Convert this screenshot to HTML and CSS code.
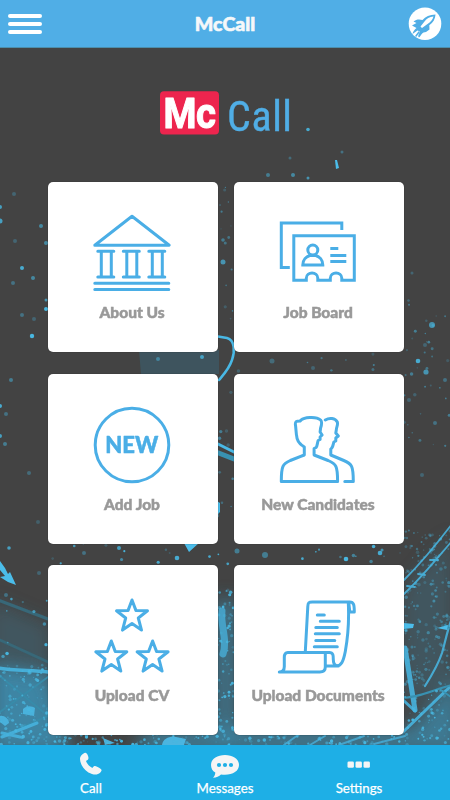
FILE: index.html
```html
<!DOCTYPE html>
<html lang="en">
<head>
<meta charset="utf-8">
<title>McCall</title>
<link rel="stylesheet" href="styles.css">
</head>
<body>
<div class="app">
  <header class="topbar">
    <button class="menu" aria-label="Menu"><span></span><span></span><span></span></button>
    <h1>McCall</h1>
    <svg class="rocket" viewBox="408 6 34 34">
      <circle cx="425" cy="22.700" r="16.300" fill="#fff"/>
      <g stroke-linejoin="round" stroke-linecap="round">
        <path fill="#50aee6" d="M435.500 13.500c-6 .2-10 2-13 5.500-3-1-6.500-.8-9 1.500l3 1.500-4.500 2.500 4.500 2.500c-2 1.500-3.500 3.500-4 6l5-3.600 2.500 1-2 4.500 5.500-3.500 2.500-.4 3.500-2.500-.2-4.300c4-2.600 6-6.500 6.200-10.700z"/>
        <path fill="#fff" d="M433.500 15.500c-4 .5-7 2-9 5l-4 5 1.500 1.500 5.500-4c3-2 5.200-4.500 6-7.500z"/>
        <path fill="none" stroke="#50aee6" stroke-width="1.500" d="M419 31l-3 4m6.500-4.500l-3.500 5"/>
      </g>
    </svg>
  </header>

  <main class="home">
    <svg class="backdrop" viewBox="0 48 450 697" preserveAspectRatio="none" aria-hidden="true">
      <defs>
        <filter id="soft" x="-20%" y="-20%" width="140%" height="140%"><feGaussianBlur stdDeviation=".7"/></filter>
        <filter id="haze" x="-50%" y="-50%" width="200%" height="200%"><feGaussianBlur stdDeviation="9"/></filter>
      </defs>
      <rect y="48" width="450" height="697" fill="#434343"/>
      <g fill="#3c91b5" filter="url(#haze)">
        <path opacity=".85" d="M-10 665l60 8 20 80H-10z"/>
        <path opacity=".25" d="M-10 600l60 25v50H-10z"/>
        <path opacity=".7" d="M150 728h260l50-55v80H130z"/>
        <path opacity=".6" d="M213 600h25v140h-25z"/>
        <path opacity=".25" d="M402 590l50-55v150l-50 20z"/>
      </g>
      <path fill="#3a6475" opacity=".55" filter="url(#soft)" d="M139 350h80v24h-78z"/>
      <g fill="none" stroke="#49b8e5" stroke-linecap="round" filter="url(#soft)">
        <path stroke-width="2.500" d="M215 336l12 2c8 2 8 14 5 22-3 9-8 14-13 20"/>
        <path stroke-width="3" d="M216 443l18 9"/>
        <path stroke="#3991b1" stroke-width="5" d="M216 452l18 7"/>
        <path stroke="#376778" stroke-width="3" d="M-2 600l50 19M0 640l48 22"/>
        <path stroke-width="3.500" opacity=".85" d="M-2 668c16 3 33 2 50 4"/>
        <path stroke="#388ba9" stroke-width="2" d="M0 676l48 40M0 712l48-35M0 737l50-22"/>
        <path stroke-width="1.800" opacity=".85" d="M404 580c18-18 32-35 48-56M404 594c18-17 30-32 48-53M407 586l8 1m3-13l7 1m5-15l8 0"/>
        <path stroke-width="5" opacity=".85" d="M405 648l10 62"/>
        <path stroke-width="2.200" opacity=".85" d="M452 618c-5 13-7 25-10 35-4 12-10 22-17 33"/>
        <path stroke-width="3" opacity=".85" d="M403 732c15-14 34-33 50-48M415 711l-12-11"/>
        <path stroke="#3991b1" stroke-width="2" d="M400 698c20 0 34-9 52-13M441 690l10 7M445 625l6 4"/>
        <path stroke-width="2" opacity=".7" d="M284 745l14-10m12 10l15-9m14 9l25-9M374 744l31-8"/>
        <path stroke-width="7" opacity=".7" d="M222 611c-2 14 6 29 1 43"/>
        <path stroke-width="3" opacity=".8" d="M2 737l35-14m-35 10l18 4"/>
      </g>
      <g fill="#4cbdea" filter="url(#soft)">
        <path d="M0 561l5 7 3 6 2-2 6 13-8-3-8-5 5-1-5-6z"/>
        <path d="M184 543h15l-10 9zM217 501l3 2v9l-3 3z"/>
        <path opacity=".8" d="M23 709c4-4 9-3 12-1l-1 8-11-2zM0 716c4-1 9 3 9 7l-4 3-5-4z"/>
        <path d="M404 623l10 1-1 4-9 1zM437 628l11-3-1 5z"/>
        <path opacity=".9" d="M162 745c1-7 8-9 14-8l10 2-2 6zM103 738l12 5-10 2z"/>
        <path d="M335 160l2 0 2 8-3 1z"/>
      </g>
      <g id="specks" fill="#48b7e0" filter="url(#soft)"></g>
    </svg>

    <svg class="logo" viewBox="160 91 160 44" role="img" aria-label="McCall">
      <rect x="160" y="91.300" width="59" height="43.200" rx="4" fill="#ed254e"/>
      <text class="logo-mc" y="128"><tspan x="163.500" textLength="33" lengthAdjust="spacingAndGlyphs">M</tspan><tspan x="196" textLength="20" lengthAdjust="spacingAndGlyphs">c</tspan></text>
      <text class="logo-call" x="227" y="130.500" textLength="65" lengthAdjust="spacing">Call</text>
    </svg>

    <nav class="grid">
      <a class="card">
        <svg class="icon" viewBox="88.200 208.500 90 90">
          <path d="M95 245.700l37.200-29 37.200 29zM98 251.800h16M123.500 251.800h16M149 251.800h16M98 277.500h16M123.500 277.500h16M149 277.500h16M101.500 252v25M111.500 252v25M127 252v25M137 252v25M152.500 252v25M162.500 252v25M95 283.800h74M95 290h74"/>
        </svg>
        <span>About Us</span>
      </a>
      <a class="card">
        <svg class="icon square" viewBox="274.200 208 90 90">
          <path d="M290 267.500h-8.500v-44.500h60.500v7M306.500 280.300h-12.500v-44.500h60.500v44.500h-12.500v-2c0-7-11.500-7-11.500 0v2h-12.500v-2c0-7-11.500-7-11.500 0zM303 265c0-5 3.500-8.500 7-9.500h6c3.500 1 7 4.500 7 9.500zM330.500 248.500h8M330.500 255.500h16M330.500 261.500h16"/>
          <circle cx="313" cy="250" r="5"/>
        </svg>
        <span>Job Board</span>
      </a>
      <a class="card">
        <svg class="icon" viewBox="88.200 400 90 90">
          <circle cx="132.200" cy="445" r="36.800"/>
          <text class="new" x="105.500" y="452.500" textLength="53" lengthAdjust="spacingAndGlyphs">NEW</text>
        </svg>
        <span>Add Job</span>
      </a>
      <a class="card">
        <svg class="icon" viewBox="274.200 400 90 90">
          <path d="M281.500 481.500c0-16 1.500-17.500 9-21l14-5.500v-8c-6-4-7.500-7-8-13.500l-.7-7.500c-1-5 1-5 4.500-5 3-4 16-5 20.500-1 2 2 1 5 0 8l-.5 4 2 3-2 2v2.500l-2 1c-1 4-1 6-2 7l-2 1v6.500l14 5.500c8 3.500 9.500 5 9.500 21z"/>
          <path d="M325.500 420c4-2.500 10-2 12 2 1 3-1 5-1 8l-.5 3 2.500 3-2.500 2 0 3-2 1c-1 4-1 6-3 7v6l13 5.500c8 3.500 9.500 5 9.500 21h-8.500"/>
        </svg>
        <span>New Candidates</span>
      </a>
      <a class="card">
        <svg class="icon" viewBox="88.200 591.500 90 90">
          <defs><path id="star" d="M0-15.500l3.900 10.400 11.600.4-9.200 7.200 3.200 12.100L0 8.100l-9.500 6.500 3.200-12.100-9.200-7.200 11.600-.4z"/></defs>
          <use href="#star" x="132.200" y="616"/><use href="#star" x="111.500" y="657"/><use href="#star" x="152.800" y="657"/>
        </svg>
        <span>Upload CV</span>
      </a>
      <a class="card">
        <svg class="icon" viewBox="274.200 591.500 90 90">
          <path d="M305.500 652l2.500-45c.2-4 1-4.500 4.500-4.500h37.500c4 0 4.500 3 4.500 10h-4.500l-1-9M348.500 603c1 20-1 38-3 49-2 10-4 14.500-9 14.500h-10M288 653h41.500c4 0 4 3 4 7s1.500 6.500 5 6.500M288 653c-3 0-3.500 2-3.500 5v9c0 4-1.500 5.500-5 5.500h40.500c4 0 5.500-2 5.500-5v-14M317.500 615.500h7M320.500 621.800h19M316 628h21.500M315.500 634.300h24M316 641h19M314.500 647.200h23"/>
        </svg>
        <span>Upload Documents</span>
      </a>
    </nav>
  </main>

  <footer class="tabs">
    <a class="tab"><svg viewBox="0 0 30 26"><path d="M7.600 1.400c2-1.500 3.600-.2 4.600 3 .7 2.500 0 3.300-2.200 4.500 1 3 3.300 5.500 6.400 7 1.500-2 2.400-2.500 4.700-1.200 5 2.400 5.500 3.500 3 6-2.700 2.600-7 2.300-11.700-.2C7.300 17 4.200 12 4 7c-.1-2.500 1.500-4.300 3.600-5.600z"/></svg><span>Call</span></a>
    <a class="tab"><svg viewBox="0 0 30 26"><path d="M15 3C7 3 1 7.200 1 13c0 3.300 1.500 6 4.300 7.500 0 2-1 4-2.300 5.200 3.500 0 6.200-1.200 8-3.200 10 1.500 18-2.800 18-9.500C29 7.200 23 3 15 3z"/><g class="dots"><circle cx="9" cy="13" r="2.100"/><circle cx="15" cy="13" r="2.100"/><circle cx="21" cy="13" r="2.100"/></g></svg><span>Messages</span></a>
    <a class="tab"><svg viewBox="0 0 30 26"><rect x="3.500" y="9.500" width="6.400" height="6.200" rx="1.300"/><rect x="11.500" y="9.500" width="6.400" height="6.200" rx="1.300"/><rect x="19.500" y="9.500" width="6.400" height="6.200" rx="1.300"/></svg><span>Settings</span></a>
  </footer>
</div>
<script src="backdrop.js"></script>
</body>
</html>
```
FILE: styles.css
```css
* { box-sizing: border-box; }
body { margin: 0; font-family: Lato, "Liberation Sans", sans-serif; }
.app { width: 450px; height: 800px; display: flex; flex-direction: column; overflow: hidden; }

.topbar { height: 48px; flex: none; background: #50aee6; display: flex; align-items: center; justify-content: space-between; padding: 0 8px; border-bottom: 1px solid #4b8eac; }
.menu { width: 34px; height: 20px; padding: 0; border: 0; background: none; display: flex; flex-direction: column; justify-content: space-between; }
.menu span { height: 4px; border-radius: 2px; background: #fff; }
.topbar h1 { margin: 0; padding-top: 1px; font-size: 19.5px; line-height: 24px; font-weight: 900; color: #f5f8fa; -webkit-text-stroke: .6px #f5f8fa; }
.rocket { width: 34px; height: 34px; }

.home { position: relative; flex: 1; padding: 43px 46px 0 48px; background: #434343; }
.backdrop { position: absolute; inset: 0; width: 100%; height: 100%; }
.logo { position: relative; display: block; width: 160px; height: 44px; margin-left: 112px; overflow: visible; }
.logo text { font-family: Roboto, sans-serif; }
.logo-mc { font-size: 42px; font-weight: 700; fill: #fff; stroke: #fff; stroke-width: 1; stroke-linejoin: round; }
.logo-call { font-size: 42px; font-weight: 400; fill: #50aee6; font-stretch: condensed; stroke: #50aee6; stroke-width: .4; }

.grid { position: relative; margin-top: 47px; display: grid; grid-template-columns: 170px 170px; column-gap: 16px; row-gap: 21.5px; }
.card { height: 170px; padding-top: 26px; border-radius: 5px; background: #fff; box-shadow: 0 0 1px #222; display: flex; flex-direction: column; align-items: center; }
.card span { margin: 4px 2px 0 0; font-size: 15.5px; line-height: 20px; font-weight: 900; color: #999; white-space: nowrap; -webkit-text-stroke: .5px #999; }
.icon { width: 90px; height: 90px; flex: none; fill: none; stroke: #4aaee6; stroke-width: 3; stroke-linecap: round; stroke-linejoin: round; }
.icon.square { stroke-linecap: butt; stroke-linejoin: miter; }
.new { font: 900 22px Lato, sans-serif; fill: #4aaee6; stroke: #4aaee6; stroke-width: .5; }

.tabs { height: 55px; flex: none; padding: 0 24px; background: #1eafe6; display: grid; grid-template-columns: repeat(3, 1fr); }
.tab { display: flex; flex-direction: column; align-items: center; padding-top: 7px; color: #fff; font-size: 13.3px; line-height: 17px; -webkit-text-stroke: .25px #fff; }
.tab svg { width: 30px; height: 26px; fill: #f5f5f5; }
.tab span { margin-top: 2px; }
.dots { fill: #1eafe6; }
```
FILE: backdrop.js
```javascript
// Paint specks: x, y, radius, opacity
const specks = [
  [308,129.500,1.800,.9],[342,152,1.500,.4],[290,158,1.500,.35],[268,175,2,.5],[293,175,2,.6],[308,178,1.500,.7],
  [14,194,2,.3],[0,207,2,.8],[0,221,2.500,.8],[41,226,2,.6],[46,243,2,.6],[15,241,2,.3],[22,268,2,.9],[33,278,2,.6],
  [13,283,2,.4],[46,309,2,1],[46,300,1.500,.7],[22,315,2,.4],[34,319,2,.3],[32,336,2.200,1],[11,380,2,.5],[0,406,2,.9],
  [6,414,2,.4],[0,436,2,.8],[5,444,2,.5],[29,473,2,.35],[38,522,2,.25],[9,548,1.800,.8],[119,548,2,.8],[177,558,2.300,.9],
  [84,553,2,.4],[39,573,2,.3],[6,595,2,.4],[202,357,2,.8],[158,359,2,.5],[223,262,2.500,.7],[223,240,1.800,.5],
  [272,361,2.500,.35],[313,368,2,.3],[432,325,3,.7],[425,345,2,.3],[418,361,2.300,.9],[426,372,2.600,.7],[445,380,2,.4],
  [409,400,2,.3],[435,423,2,.4],[422,475,2,.3],[412,273,1.500,.3],[346,559,2.300,1],[380,553,2.300,.9],[265,555,3,.5],[237,551,2.500,.5]
];
// Dense splatter regions: x, y, width, height, count
const regions = [
  [404,300,46,150,35],[404,530,46,155,200],[0,665,48,80,110],[217,590,17,150,80],
  [48,735,356,10,150],[404,690,46,55,65],[48,544,356,20,24],[234,352,170,20,8],[0,590,48,70,10],[217,182,16,350,25]
];
let seed = 29;
const rnd = () => (seed = seed * 16807 % 2147483647) / 2147483647;
for (const [x, y, w, h, n] of regions) {
  const top = y < 540 ? .35 : .8;
  for (let i = 0; i < n; i++) specks.push([x + rnd() * w, y + rnd() * h, .6 + rnd() * 1.2, .2 + rnd() * top]);
}
const layer = document.getElementById("specks");
for (const [x, y, r, o] of specks) {
  const e = document.createElementNS("http://www.w3.org/2000/svg", "ellipse");
  e.setAttribute("cx", x); e.setAttribute("cy", y);
  e.setAttribute("rx", r); e.setAttribute("ry", r); e.setAttribute("opacity", Math.min(1, o));
  layer.append(e);
}
```
